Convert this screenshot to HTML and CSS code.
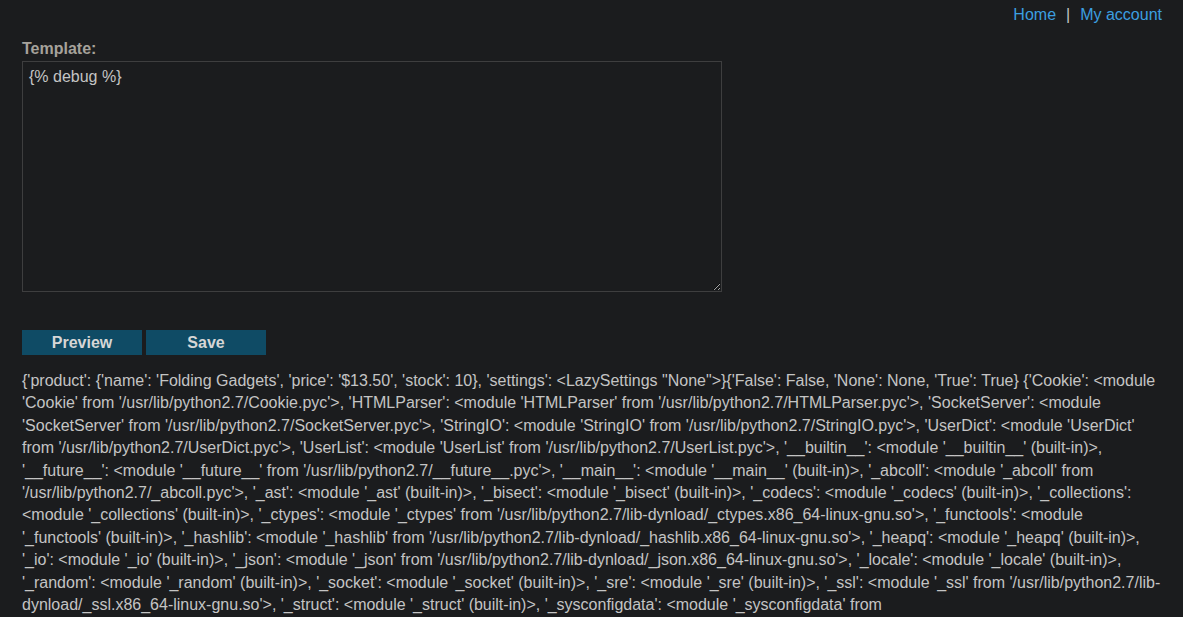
FILE: index.html
```html
<!DOCTYPE html>
<html lang="en">
<head>
    <meta charset="UTF-8">
    <meta name="viewport" content="width=device-width, initial-scale=1.0">
    <title>Edit template</title>
    <link rel="stylesheet" href="styles.css">
</head>
<body>
    <div class="topnav">
        <a href="#">Home</a>
        <span class="sep">|</span>
        <a href="#">My account</a>
    </div>

    <form class="editor">
        <label for="template">Template:</label>
        <textarea id="template">{% debug %}</textarea>
        <div class="actions">
            <button type="button" class="btn">Preview</button>
            <button type="button" class="btn">Save</button>
        </div>
    </form>

    <div class="output">{'product': {'name': 'Folding Gadgets', 'price': '$13.50', 'stock': 10}, 'settings': &lt;LazySettings "None"&gt;}{'False': False, 'None': None, 'True': True} {'Cookie': &lt;module 'Cookie' from '/usr/lib/python2.7/Cookie.pyc'&gt;, 'HTMLParser': &lt;module 'HTMLParser' from '/usr/lib/python2.7/HTMLParser.pyc'&gt;, 'SocketServer': &lt;module 'SocketServer' from '/usr/lib/python2.7/SocketServer.pyc'&gt;, 'StringIO': &lt;module 'StringIO' from '/usr/lib/python2.7/StringIO.pyc'&gt;, 'UserDict': &lt;module 'UserDict' from '/usr/lib/python2.7/UserDict.pyc'&gt;, 'UserList': &lt;module 'UserList' from '/usr/lib/python2.7/UserList.pyc'&gt;, '__builtin__': &lt;module '__builtin__' (built-in)&gt;, '__future__': &lt;module '__future__' from '/usr/lib/python2.7/__future__.pyc'&gt;, '__main__': &lt;module '__main__' (built-in)&gt;, '_abcoll': &lt;module '_abcoll' from '/usr/lib/python2.7/_abcoll.pyc'&gt;, '_ast': &lt;module '_ast' (built-in)&gt;, '_bisect': &lt;module '_bisect' (built-in)&gt;, '_codecs': &lt;module '_codecs' (built-in)&gt;, '_collections': &lt;module '_collections' (built-in)&gt;, '_ctypes': &lt;module '_ctypes' from '/usr/lib/python2.7/lib-dynload/_ctypes.x86_64-linux-gnu.so'&gt;, '_functools': &lt;module '_functools' (built-in)&gt;, '_hashlib': &lt;module '_hashlib' from '/usr/lib/python2.7/lib-dynload/_hashlib.x86_64-linux-gnu.so'&gt;, '_heapq': &lt;module '_heapq' (built-in)&gt;, '_io': &lt;module '_io' (built-in)&gt;, '_json': &lt;module '_json' from '/usr/lib/python2.7/lib-dynload/_json.x86_64-linux-gnu.so'&gt;, '_locale': &lt;module '_locale' (built-in)&gt;, '_random': &lt;module '_random' (built-in)&gt;, '_socket': &lt;module '_socket' (built-in)&gt;, '_sre': &lt;module '_sre' (built-in)&gt;, '_ssl': &lt;module '_ssl' from '/usr/lib/python2.7/lib-dynload/_ssl.x86_64-linux-gnu.so'&gt;, '_struct': &lt;module '_struct' (built-in)&gt;, '_sysconfigdata': &lt;module '_sysconfigdata' from '/usr/lib/python2.7/_sysconfigdata.pyc'&gt;, '_warnings': &lt;module '_warnings' (built-in)&gt;, '_weakref': &lt;module '_weakref' (built-in)&gt;, '_weakrefset': &lt;module '_weakrefset' from '/usr/lib/python2.7/_weakrefset.pyc'&gt;, 'abc': &lt;module 'abc' from '/usr/lib/python2.7/abc.pyc'&gt;}</div>
</body>
</html>
```

FILE: styles.css
```css
body{
    margin: 0;
    background: #1b1c1e;
    color: #c4c4c4;
    font-family: "Liberation Sans", Arial, sans-serif;
    font-size: 16px;
    line-height: 22px;
}
.topnav{
    display: flex;
    justify-content: flex-end;
    gap: 10px;
    padding: 4px 21px 0 0;
}
.topnav a{
    color: #3b9fe0;
    text-decoration: none;
}
.sep{
    color: #c4c4c4;
}
.editor{
    padding: 0 22px;
    margin-top: 12px;
}
.editor label{
    display: block;
    font-weight: bold;
    color: #a6a29b;
}
.editor textarea{
    display: block;
    box-sizing: border-box;
    width: 700px;
    height: 231px;
    margin-top: 1px;
    padding: 6px;
    background: #1b1c1e;
    color: #c4c4c4;
    border: 1px solid #3e3e3f;
    font-family: "Liberation Sans", Arial, sans-serif;
    font-size: 16px;
    line-height: 18px;
}
.actions{
    display: flex;
    gap: 4px;
    margin-top: 38px;
}
.btn{
    width: 120px;
    height: 25px;
    padding: 0;
    border: none;
    background: #0f4b65;
    color: #d6d6d6;
    font-family: "Liberation Sans", Arial, sans-serif;
    font-size: 16px;
    font-weight: bold;
}
.output{
    padding: 0 22px;
    margin-top: 15px;
    line-height: 1.4;
}
```
